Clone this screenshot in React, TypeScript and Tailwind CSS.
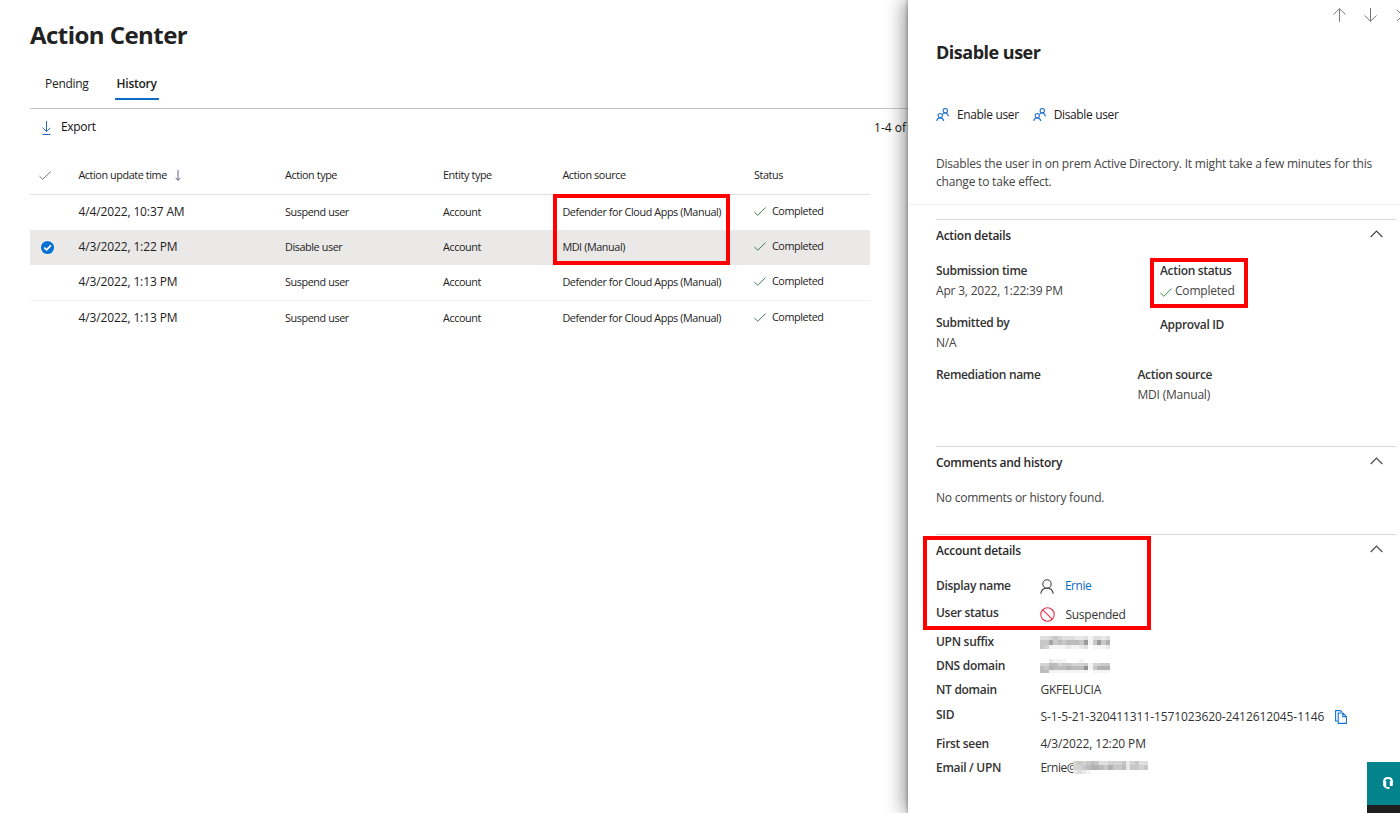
import React from 'react';

const rows = [
  { time: '4/4/2022, 10:37 AM', type: 'Suspend user', source: 'Defender for Cloud Apps (Manual)', selected: false },
  { time: '4/3/2022, 1:22 PM', type: 'Disable user', source: 'MDI (Manual)', selected: true },
  { time: '4/3/2022, 1:13 PM', type: 'Suspend user', source: 'Defender for Cloud Apps (Manual)', selected: false },
  { time: '4/3/2022, 1:13 PM', type: 'Suspend user', source: 'Defender for Cloud Apps (Manual)', selected: false },
];

const Check: React.FC<{ className?: string }> = ({ className }) => (
  <svg className={`shrink-0 ${className}`} width="12" height="9" viewBox="0 0 12 9" fill="none" stroke="currentColor" strokeWidth="1">
    <path d="M0.4 5 L3.8 8.3 L11.6 0.5" />
  </svg>
);

const Chevron = () => (
  <svg className="mb-[3px]" width="13" height="8" viewBox="0 0 13 8" fill="none" stroke="#444" strokeWidth="1.1">
    <path d="M0.7 7 L6.5 1 L12.3 7" />
  </svg>
);

const UsersIcon = () => (
  <svg width="13" height="13" viewBox="0 0 13 13" fill="none" stroke="#2573cf" strokeWidth="1.1" className="mb-[1px] shrink-0">
    <circle cx="9.3" cy="2.7" r="2.2" />
    <path d="M6.5 6.4 C7.6 4.4 11.8 4.2 12.4 8.4" />
    <circle cx="4.3" cy="7.6" r="2.1" />
    <path d="M0.8 13 C1.2 8.8 7.2 8.8 7.7 13" />
  </svg>
);

// redacted text, one hex digit of darkness per block
const Mosaic: React.FC<{ cells: string[]; width: number; height: number; className?: string }> = ({ cells, width, height, className }) => (
  <svg
    className={className}
    width={width}
    height={height}
    viewBox={`0 0 ${cells[0].length} ${cells.length}`}
    preserveAspectRatio="none"
    shapeRendering="crispEdges"
  >
    {cells.map((line, y) =>
      line.split('').map((c, x) => (
        <rect key={`${x}-${y}`} x={x} y={y} width="1" height="1" fill="#000" fillOpacity={parseInt(c, 16) / 23} />
      ))
    )}
  </svg>
);

const SectionHead: React.FC<{ title: string }> = ({ title }) => (
  <div className="flex h-[33px] w-[460px] items-center justify-between border-t border-[#d9d9d9] pr-[13px]">
    <h3 className="text-[12px] font-semibold tracking-[-0.28px] text-[#292929]">{title}</h3>
    <Chevron />
  </div>
);

const Field: React.FC<{ label: string; children?: React.ReactNode }> = ({ label, children }) => (
  <div>
    <div className="h-[21px] text-[12px] leading-[21px] font-semibold tracking-[-0.33px] text-[#333]">{label}</div>
    <div className="flex h-[20px] items-center text-[12px] tracking-[-0.2px] text-[#444]">{children}</div>
  </div>
);

export default function App() {
  return (
    <div className="flex h-[813px] w-[1400px] overflow-hidden bg-white font-['Open_Sans',sans-serif] whitespace-nowrap text-[#222]">
      <main className="w-[908px] shrink-0 pl-[30px]">
        <h1 className="pt-[19px] text-[24px] leading-[32px] font-bold tracking-[-0.54px]">Action Center</h1>

        <nav className="mt-[17px] flex h-[41px] gap-[26px] border-b border-[#c4c6c6] pl-[15px] text-[12px] tracking-[-0.28px]">
          <span className="h-[32px] leading-[32px]">Pending</span>
          <span className="h-[32px] border-b-2 border-[#0c6cc4] px-[2px] leading-[32px] font-semibold">History</span>
        </nav>

        <div className="flex h-[36px] items-center justify-between pr-[2px] pl-[12px] text-[12px] text-[#111]">
          <div className="flex items-center gap-[10px]">
            <svg className="mt-[2px]" width="9" height="14" viewBox="0 0 9 14" fill="none" stroke="#2a66c2" strokeWidth="1">
              <path d="M4.5 0 V10.5 M0.7 6.8 L4.5 10.6 L8.3 6.8 M0.5 13.5 H8.5" />
            </svg>
            <span className="tracking-[-0.33px]">Export</span>
          </div>
          <span className="pt-[1px]">1-4 of</span>
        </div>

        <section className="relative mt-[10px] w-[840px] text-[10.8px] tracking-[-0.4px]">
          <div className="grid h-[40px] grid-cols-[48.4px_206.6px_158px_119.4px_191.6px_1fr] items-center border-b border-[#e2e2e2] pt-px">
            <Check className="ml-[9px] text-[#777]" />
            <span className="flex items-center gap-[8px]">
              Action update time
              <svg className="mt-[1px]" width="6" height="11" viewBox="0 0 6 11" fill="none" stroke="#557" strokeWidth="0.9">
                <path d="M3 0 V10.2 M0.6 7.8 L3 10.3 L5.4 7.8" />
              </svg>
            </span>
            <span>Action type</span>
            <span>Entity type</span>
            <span>Action source</span>
            <span>Status</span>
          </div>
          {rows.map((r, i) => (
            <div
              key={i}
              className={`grid grid-cols-[48.4px_206.6px_158px_119.4px_191.6px_1fr] items-center ${i === 0 ? 'h-[34.5px]' : 'h-[35.6px]'} ${r.selected ? 'bg-[#ebe9e8]' : ''} ${i === 2 ? 'border-b border-[#f1f1f1]' : ''}`}
            >
              <span className="pl-[10px]">
                {r.selected && (
                  <svg width="15" height="15" viewBox="0 0 15 15">
                    <circle cx="7.5" cy="7.5" r="7.3" fill="#fff" />
                    <circle cx="7.5" cy="7.5" r="6.6" fill="#0a72d2" />
                    <path d="M4.2 7.6 L6.6 9.8 L10.9 5.4" fill="none" stroke="#fff" strokeWidth="1.8" />
                  </svg>
                )}
              </span>
              <span className="text-[12px] tracking-[-0.12px]">{r.time}</span>
              <span>{r.type}</span>
              <span>Account</span>
              <span>{r.source}</span>
              <span className="flex items-center gap-[6px] pb-[2px]">
                <Check className="text-[#3f7d4e]" />
                Completed
              </span>
            </div>
          ))}
          <div className="absolute top-[39px] left-[523px] h-[71px] w-[177px] border-4 border-[#ff0000]" />
        </section>
      </main>

      <aside className="relative h-[813px] w-[492px] shrink-0 bg-white pl-[28px] text-[12px] shadow-[-4px_0_18px_rgba(0,0,0,0.42),-1px_0_3px_rgba(0,0,0,0.25)]">
        <div className="flex h-[30px] items-center gap-[18px] pl-[397px]">
          <svg width="13" height="14" viewBox="0 0 13 14" className="shrink-0" fill="none" stroke="#777" strokeWidth="1">
            <path d="M6.5 14 V0.8 M0.5 6.6 L6.5 0.7 L12.5 6.6" />
          </svg>
          <svg width="13" height="14" viewBox="0 0 13 14" className="shrink-0" fill="none" stroke="#777" strokeWidth="1">
            <path d="M6.5 0 V13.2 M0.5 7.4 L6.5 13.3 L12.5 7.4" />
          </svg>
          <svg width="11" height="11" viewBox="0 0 11 11" className="ml-[2px] shrink-0" fill="none" stroke="#777" strokeWidth="1">
            <path d="M0 0 L11 11 M11 0 L0 11" />
          </svg>
        </div>
        <h2 className="mt-[9px] text-[18px] leading-[26px] font-bold tracking-[-0.5px]">Disable user</h2>

        <div className="mt-[40px] flex h-[20px] items-center gap-[14px] tracking-[-0.36px]">
          <span className="flex items-center gap-[8px]">
            <UsersIcon />
            Enable user
          </span>
          <span className="flex items-center gap-[8px]">
            <UsersIcon />
            Disable user
          </span>
        </div>

        <p className="mt-[30px] h-[49px] leading-[17.5px] tracking-[-0.2px] text-[#444]">
          Disables the user in on prem Active Directory. It might take a few minutes for this
          <br />
          change to take effect.
        </p>
        <div className="-ml-[28px] h-[14.5px] border-t border-[#f0f0f0]" />

        <SectionHead title="Action details" />
        <div className="relative flex h-[194px] pt-[8px]">
          <div className="flex w-[201.5px] flex-col gap-[11px]">
            <Field label="Submission time">Apr 3, 2022, 1:22:39 PM</Field>
            <Field label="Submitted by">N/A</Field>
            <Field label="Remediation name" />
          </div>
          <div className="flex flex-col">
            <div className="h-[54px] pl-[22.5px]">
              <Field label="Action status">
                <Check className="mt-[3px] mr-[3px] text-[#37953f]" />
                Completed
              </Field>
            </div>
            <div className="h-[50px] pl-[22.5px]"><Field label="Approval ID" /></div>
            <Field label="Action source">MDI (Manual)</Field>
          </div>
          <div className="absolute top-[6.5px] left-[214px] h-[50px] w-[98px] border-4 border-[#ff0000]" />
        </div>

        <SectionHead title="Comments and history" />
        <div className="h-[55px] pt-[8px] leading-[21px] tracking-[-0.24px] text-[#444]">No comments or history found.</div>

        <div className="relative">
          <SectionHead title="Account details" />
          <div className="grid grid-cols-[104.4px_1fr] grid-rows-[28px_28px_24px_24.5px_24.5px_29px_24px_24px] items-start pt-[7px] leading-[24px] text-[#333] [&>b]:font-semibold [&>b]:tracking-[-0.3px]">
            <b>Display name</b>
            <span className="flex items-center gap-[10.5px]">
              <svg className="mt-[1px]" width="14" height="15" viewBox="0 0 14 15" fill="none" stroke="#444" strokeWidth="1.1">
                <circle cx="7" cy="5" r="4.2" />
                <path d="M0.8 14.8 C1.6 7.2 12.4 7.2 13.2 14.8" />
              </svg>
              <span className="tracking-[-0.45px] text-[#0c6cc4]">Ernie</span>
            </span>
            <b className="-mt-[1px]">User status</b>
            <span className="mt-[1px] flex items-center gap-[10px] tracking-[-0.25px]">
              <svg width="15" height="15" viewBox="0 0 15 15" fill="none" stroke="#e0344c" strokeWidth="1.1">
                <circle cx="7.5" cy="7.5" r="6.7" />
                <path d="M2.8 2.8 L12.2 12.2" />
              </svg>
              Suspended
            </span>
            <b>UPN suffix</b>
            <Mosaic className="mt-[6px]" width={70} height={13} cells={['3345433322313323', '5585656665915957', '5411112112301112']} />
            <b>DNS domain</b>
            <Mosaic className="mt-[5px]" width={70} height={14} cells={['0021110001000000', '4466455444514455', '6576667666a15777', '6611111111101111']} />
            <b>NT domain</b>
            <span className="tracking-[-0.2px]">GKFELUCIA</span>
            <b>SID</b>
            <span className="mt-[2px] flex items-center gap-[11px] tracking-[-0.08px]">
              S-1-5-21-320411311-1571023620-2412612045-1146
              <svg width="12" height="14" viewBox="0 0 12 14" fill="none" stroke="#1673cf" strokeWidth="1.1">
                <path d="M3 11 H0.6 V0.6 H5.5 L7 2" />
                <path d="M3.2 3 H8 L11.4 6.4 V13.4 H3.2 Z M7.8 3 V6.6 H11.4" />
              </svg>
            </span>
            <b>First seen</b>
            <span className="tracking-[-0.14px]">4/3/2022, 12:20 PM</span>
            <b>Email / UPN</b>
            <span className="flex items-center">
              <span className="tracking-[-0.45px]">Ernie@</span>
              <span className="relative -ml-[4px] flex bg-white">
                <Mosaic width={75} height={13} cells={['45456533444524533', '44567765755625545', '23210000000000000']} />
              </span>
            </span>
          </div>
          <div className="absolute top-[2px] -left-[13px] h-[94px] w-[228px] border-4 border-[#ff0000]" />
        </div>

        <div className="absolute right-0 bottom-0 h-[51px] w-[33px] border-b-8 border-[#201f1f] bg-[#03848d]">
          <svg width="12" height="14" viewBox="0 0 12 14" className="mt-[14px] ml-[15px]" fill="none" stroke="#fff">
            <path d="M2 7 V5.8 C2 0.6 10 0.6 10 5.8 V7" strokeWidth="2" />
            <path d="M2.7 5 V10 M9.3 5 V10" strokeWidth="3" />
            <path d="M2.2 9.5 Q3 12 7.5 12" strokeWidth="1.8" />
          </svg>
        </div>
      </aside>
    </div>
  );
}
